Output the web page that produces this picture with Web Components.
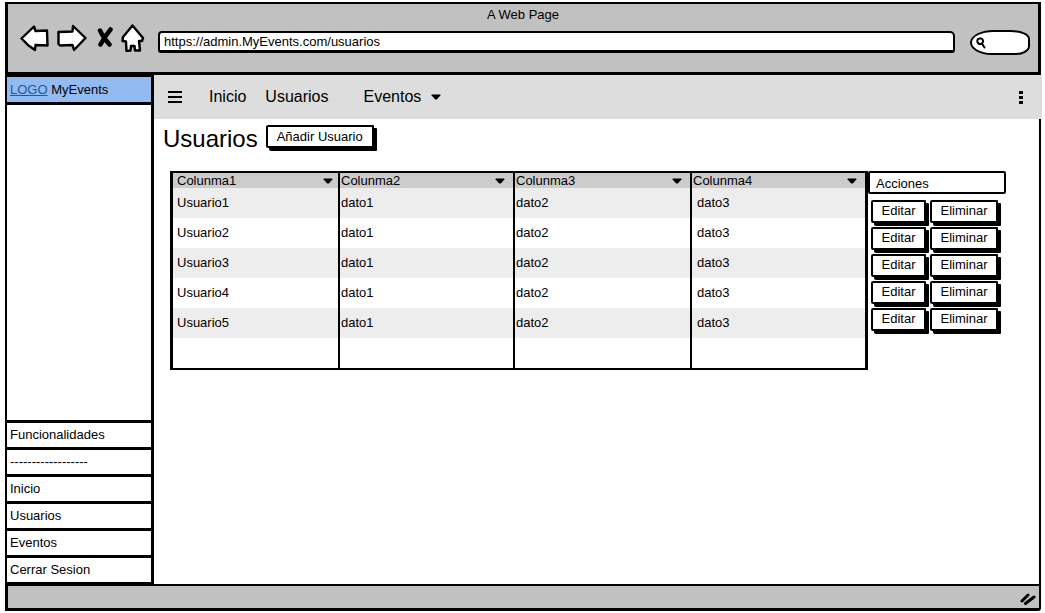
<!DOCTYPE html>
<html lang="es">
<head>
<meta charset="utf-8">
<title>A Web Page</title>
<style>
  html, body { margin: 0; background: #fff; }
  body { font: 13px/16px "Liberation Sans", Arial, sans-serif; color: #000; }
</style>
</head>
<body>
<browser-window>
  <side-menu slot="side"></side-menu>
  <nav-bar></nav-bar>
  <users-page></users-page>
</browser-window>

<script>
const define = (name, html) => {
  const template = document.createElement('template');
  template.innerHTML = `<style>*{box-sizing:border-box}</style>` + html;
  customElements.define(name, class extends HTMLElement {
    constructor() {
      super();
      this.attachShadow({ mode: 'open' }).append(template.content.cloneNode(true));
    }
  });
};

define('sketch-caret', `
<style>
  :host { display: block; flex: none; width: 10px; height: 6px; }
  svg { display: block; }
</style>
<svg width="10" height="6" viewBox="0 0 10 6" aria-hidden="true"><path d="M1 .5h8q1 .3.4 1L6 5.3q-1 .6-2 0L.6 1.5Q0 .8 1 .5z"/></svg>`);

define('sketch-button', `
<style>
  :host { display: block; padding: 0 3px 3px 0; }
  button { display: block; font: inherit; color: inherit; margin: 0; width: 100%; height: 23px; padding: 0 8px;
    border: 2px solid #000; border-radius: 2px 1px 1px 2px; background: #fff; box-shadow: 3px 3px 0 #000; line-height: 18px; white-space: nowrap; }
</style>
<button type="button"><slot></slot></button>`);

define('browser-toolbar', `
<style>
  :host { display: block; background: #c1c1c1; border: 3px solid #000; border-width: 2px 3px 3px; }
  .title { text-align: center; padding-top: 3px; line-height: 16px; }
  .bar { display: flex; align-items: center; height: 49px; padding: 0 8px 19px 12px; }
  .icons { display: flex; align-items: center; gap: 8px; flex: none; }
  .icons button { display: block; border: 0; padding: 0; margin: 0; background: none; }
  svg { display: block; }
  .icons path { fill: #fff; stroke: #000; stroke-width: 2.4; stroke-linejoin: round; }
  .icons path.x { fill: none; stroke-width: 4.5; stroke-linecap: round; }
  input { font: inherit; color: inherit; border: 0; background: none; outline: none; padding: 0; min-width: 0; flex: 1; height: 16px; }
  .url { display: flex; flex: 1; height: 22px; align-items: center; border: 2px solid #000; border-bottom-width: 3px; border-radius: 4px 5px 3px 3px; background: #fff; padding: 0 4px; margin: 8px 15px 0 13px; }
  .search { display: flex; align-items: center; width: 60px; height: 25px; border: 2px solid #000; border-radius: 26px 22px 16px 24px / 14px 10px 10px 14px; background: #fff; padding: 0 3px; margin-top: 8px; }
</style>
<div class="title">A Web Page</div>
<div class="bar">
  <div class="icons">
    <button type="button" aria-label="Atrás"><svg width="29" height="28" viewBox="0 0 29 28"><path d="M1.5 14.500L14 2.500L15.500 7L27 6.500L27.500 21.500L15.500 21L15 26L8.500 21.500Z"/></svg></button>
    <button type="button" aria-label="Adelante"><svg width="30" height="28" viewBox="0 0 30 28"><path d="M1.500 8L15.500 7.500L16 2L28.500 14L17 26L15.500 21L3 21.500L1.500 20Z"/></svg></button>
    <button type="button" aria-label="Detener"><svg width="18" height="26" viewBox="0 0 18 26"><path class="x" d="M5 5.500Q8 12 14.500 19.500M15.500 4.500Q10 11 5.500 19.500"/></svg></button>
    <button type="button" aria-label="Portada"><svg width="24" height="28" viewBox="0 0 24 28"><path d="M11.500 1.500L22 14L21 17L18 17L19 26.500L14 26.500L13.500 22L10 22L9.500 26.500L5.500 27L5 17.500L1.500 17L2 13Z"/></svg></button>
  </div>
  <div class="url"><input type="text" aria-label="Dirección" value="https://admin.MyEvents.com/usuarios"></div>
  <div class="search">
    <svg width="12" height="13" viewBox="0 0 12 13" fill="none" stroke="#000" stroke-width="2" stroke-linecap="round" aria-hidden="true"><path d="M6 2.500Q2 2 2.300 5.500Q3 8.500 6 8Q8.500 7 8 4.500Q7.500 2.500 6 2.500M7.500 8.500L9.500 11.500"/></svg>
    <input type="search" aria-label="Buscar">
  </div>
</div>`);

define('browser-window', `
<style>
  :host { display: flex; flex-direction: column; min-height: 100vh; padding: 2px 3px 2px 5px; box-sizing: border-box; }
  .view { flex: 1; display: grid; grid-template-columns: 149px 1fr; }
  .page { position: relative; }
  .page::after { content: ""; position: absolute; top: 44px; bottom: 0; right: 1px; width: 2px; background: #000; }
  browser-toolbar { margin-right: 1px; }
  footer { display: flex; justify-content: flex-end; align-items: center; height: 27px; margin-right: 1px; padding: 3px 3px 0 0; background: #c1c1c1; border: 3px solid #000; border-width: 2px 2px 3px 3px; border-bottom-right-radius: 3px; }
</style>
<browser-toolbar></browser-toolbar>
<div class="view">
  <slot name="side"></slot>
  <main class="page"><slot></slot></main>
</div>
<footer><svg width="16" height="14" viewBox="0 0 16 14" stroke="#000" stroke-width="3" stroke-linecap="round" aria-hidden="true"><path d="M2 9L8 3M5.500 11.500L14 5"/></svg></footer>`);

define('side-menu', `
<style>
  :host { display: flex; flex-direction: column; justify-content: space-between; border: solid #000; border-width: 0 3px 0 2px; }
  .brand { height: 30px; padding: 4px 3px 0; line-height: 18px; background: #93bbf1; border-bottom: 3px solid #000; border-top: 2px solid #000; }
  a { color: inherit; text-decoration: none; }
  .brand a { color: #1d5a9c; text-decoration: underline; }
  ul { list-style: none; margin: 0; padding: 0; border-bottom: 2px solid #000; }
  li { height: 27px; padding: 2px 3px 0; line-height: 20px; border-top: 3px solid #000; }
</style>
<div class="brand"><a href="#">LOGO</a> MyEvents</div>
<ul>
  <li>Funcionalidades</li>
  <li>------------------</li>
  <li><a href="#inicio">Inicio</a></li>
  <li><a href="#usuarios">Usuarios</a></li>
  <li><a href="#eventos">Eventos</a></li>
  <li><a href="#salir">Cerrar Sesion</a></li>
</ul>`);

define('nav-bar', `
<style>
  :host { display: flex; align-items: center; height: 44px; padding: 0 19px 0 14px; background: #ddd; font-size: 16px; line-height: 20px; box-sizing: border-box; }
  a { color: inherit; text-decoration: none; }
  button { display: block; border: 0; padding: 0; margin: 0; background: none; }
  nav { display: flex; align-items: center; flex: 1; margin-left: 27px; gap: 19px; }
  .more { display: flex; align-items: center; gap: 10px; margin-left: 16px; }
  svg { display: block; }
</style>
<button type="button" aria-label="Menú"><svg width="14" height="12" viewBox="0 0 14 12"><path d="M0 0h14v2H0zM0 5h14v2H0zM0 10h14v2H0z"/></svg></button>
<nav>
  <a href="#inicio">Inicio</a>
  <a href="#usuarios">Usuarios</a>
  <a class="more" href="#eventos">Eventos <sketch-caret></sketch-caret></a>
</nav>
<button type="button" aria-label="Más opciones"><svg width="4" height="13" viewBox="0 0 4 13"><path d="M0 0h4v3H0zM0 5h4v3H0zM0 10h4v3H0z"/></svg></button>`);

define('users-table', `
<style>
  :host { display: block; }
  table { width: 100%; table-layout: fixed; border-collapse: separate; border-spacing: 0; border: 3px solid #000; border-width: 2px 3px 2px 3px; }
  th { height: 15px; padding: 0 8px 0 1px; background: #ccc; font-weight: normal; text-align: left; }
  th div { display: flex; align-items: center; justify-content: space-between; height: 15px; line-height: 15px; }
  td { height: 30px; padding: 0 1px; }
  th, td { border-right: 2px solid #000; }
  th:first-child, td:first-child { padding-left: 4px; }
  th:first-child { padding-right: 5px; }
  th:last-child, td:last-child { border-right: 0; }
  td:last-child { padding-left: 5px; }
  tbody tr:nth-child(odd) td { background: #ededed; }
  tbody tr:last-child td { background: #fff; }
</style>
<table>
  <colgroup><col style="width:167px"><col style="width:175px"><col style="width:177px"><col style="width:173px"></colgroup>
  <thead><tr>${[1,2,3,4].map(n => `<th scope="col"><div>Colunma${n}<sketch-caret></sketch-caret></div></th>`).join('')}</tr></thead>
  <tbody>${[1,2,3,4,5].map(n => `<tr><td>Usuario${n}</td><td>dato1</td><td>dato2</td><td>dato3</td></tr>`).join('')}
  <tr><td></td><td></td><td></td><td></td></tr></tbody>
</table>`);

define('row-actions', `
<style>
  :host { display: block; width: 138px; flex: none; }
  h2 { margin: 0 0 5px; font: inherit; line-height: 20px; height: 23px; padding: 1px 6px 0; border: 2px solid #000; border-radius: 2px; }
  ul { list-style: none; margin: 0; padding: 0 0 0 3px; }
  li { display: grid; grid-template-columns: 58px 71px; column-gap: 1px; height: 27px; align-items: center; }
</style>
<h2>Acciones</h2>
<ul>${'<li><sketch-button>Editar</sketch-button><sketch-button>Eliminar</sketch-button></li>'.repeat(5)}</ul>`);

define('users-page', `
<style>
  :host { display: block; padding: 5px 36px 16px 9px; }
  header { display: flex; align-items: center; gap: 8px; height: 28px; }
  h1 { margin: 0; font: inherit; font-size: 24px; line-height: 28px; padding-top: 2px; }
  header sketch-button { width: 111px; }
  .data { display: flex; align-items: flex-start; margin: 19px 0 0 7px; }
  users-table { flex: 1; }
</style>
<header><h1>Usuarios</h1><sketch-button>Añadir Usuario</sketch-button></header>
<div class="data"><users-table></users-table><row-actions></row-actions></div>`);
</script>
</body>
</html>
